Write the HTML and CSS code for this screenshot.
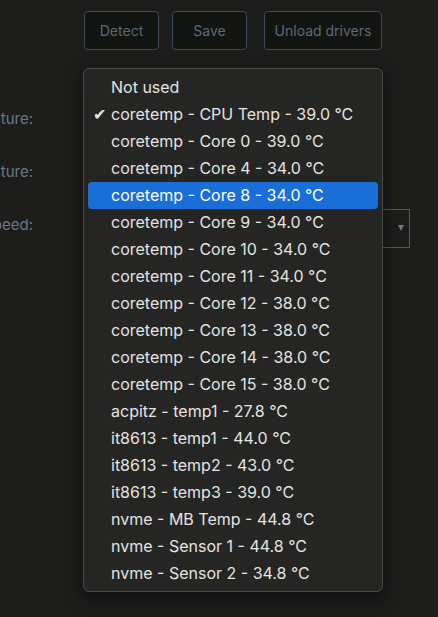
FILE: index.html
```html
<!DOCTYPE html>
<html lang="en">
<head>
    <meta charset="UTF-8">
    <meta name="viewport" content="width=device-width, initial-scale=1.0">
    <title>Sensors</title>
    <link rel="stylesheet" href="styles.css">
</head>
<body>

    <div class="toolbar">
        <button class="btn btn-detect">Detect</button>
        <button class="btn btn-save">Save</button>
        <button class="btn btn-unload">Unload drivers</button>
    </div>

    <div class="form">
        <div class="row">
            <div class="label"><span>CPU temperature:</span></div>
        </div>
        <div class="row">
            <div class="label"><span>GPU temperature:</span></div>
        </div>
        <div class="row">
            <div class="label"><span>Fan speed:</span></div>
            <div class="select"><span class="arrow"></span></div>
        </div>
    </div>

    <!-- open dropdown of the sensor select -->
    <ul class="menu">
        <li>Not used</li>
        <li class="checked">coretemp - CPU Temp - 39.0 °C</li>
        <li>coretemp - Core 0 - 39.0 °C</li>
        <li>coretemp - Core 4 - 34.0 °C</li>
        <li class="active">coretemp - Core 8 - 34.0 °C</li>
        <li>coretemp - Core 9 - 34.0 °C</li>
        <li>coretemp - Core 10 - 34.0 °C</li>
        <li>coretemp - Core 11 - 34.0 °C</li>
        <li>coretemp - Core 12 - 38.0 °C</li>
        <li>coretemp - Core 13 - 38.0 °C</li>
        <li>coretemp - Core 14 - 38.0 °C</li>
        <li>coretemp - Core 15 - 38.0 °C</li>
        <li>acpitz - temp1 - 27.8 °C</li>
        <li>it8613 - temp1 - 44.0 °C</li>
        <li>it8613 - temp2 - 43.0 °C</li>
        <li>it8613 - temp3 - 39.0 °C</li>
        <li>nvme - MB Temp - 44.8 °C</li>
        <li>nvme - Sensor 1 - 44.8 °C</li>
        <li>nvme - Sensor 2 - 34.8 °C</li>
    </ul>

</body>
</html>
```

FILE: styles.css
```css
* {
    margin: 0;
    padding: 0;
    box-sizing: border-box;
}

body {
    font-family: 'Inter', 'Noto Sans', sans-serif;
    background: #1c1d1b;
    color: #6a7783;
    height: 100vh;
    overflow: hidden;
    position: relative;
}

/* Top buttons */
.toolbar {
    display: flex;
    padding: 11px 0 0 84px;
}

.btn {
    height: 39px;
    background: #121411;
    border: 1px solid #3f4b57;
    border-radius: 4px;
    color: #5c6975;
    font-family: inherit;
    font-size: 14px;
}

.btn-detect { width: 75px; }
.btn-save { width: 75px; margin-left: 13px; }
.btn-unload { width: 118px; margin-left: 17px; }

/* Form rows, scrolled so labels are cut off */
.form {
    padding-top: 42px;
}

.row {
    display: flex;
    align-items: center;
    height: 53px;
}

.label {
    width: 33px;
    display: flex;
    justify-content: flex-end;
    overflow: hidden;
    white-space: nowrap;
    font-size: 15px;
    flex-shrink: 0;
}

.select {
    margin-left: 250px;
    width: 127px;
    height: 39px;
    margin-top: 7px;
    border: 1px solid #4c5968;
    display: flex;
    align-items: center;
    justify-content: flex-end;
    padding-right: 5px;
}

.arrow {
    width: 0;
    height: 0;
    border-left: 3px solid transparent;
    border-right: 3px solid transparent;
    border-top: 6px solid #6e7b87;
}

/* Dropdown menu */
.menu {
    position: absolute;
    left: 83px;
    top: 68px;
    width: 300px;
    list-style: none;
    background: #252523;
    border: 1px solid #4a4a48;
    border-radius: 6px;
    box-shadow: 0 6px 16px rgba(0, 0, 0, 0.5);
    padding: 5px 4px 4px;
}

.menu li {
    height: 27px;
    line-height: 27px;
    padding-left: 23px;
    font-size: 16px;
    color: #e4e4e2;
    border-radius: 4px;
    position: relative;
    white-space: nowrap;
}

.menu li.checked::before {
    content: '\2714';
    position: absolute;
    left: 5px;
    font-size: 16px;
}

.menu li.active {
    background: #1a6ed8;
    color: #fff;
}
```
